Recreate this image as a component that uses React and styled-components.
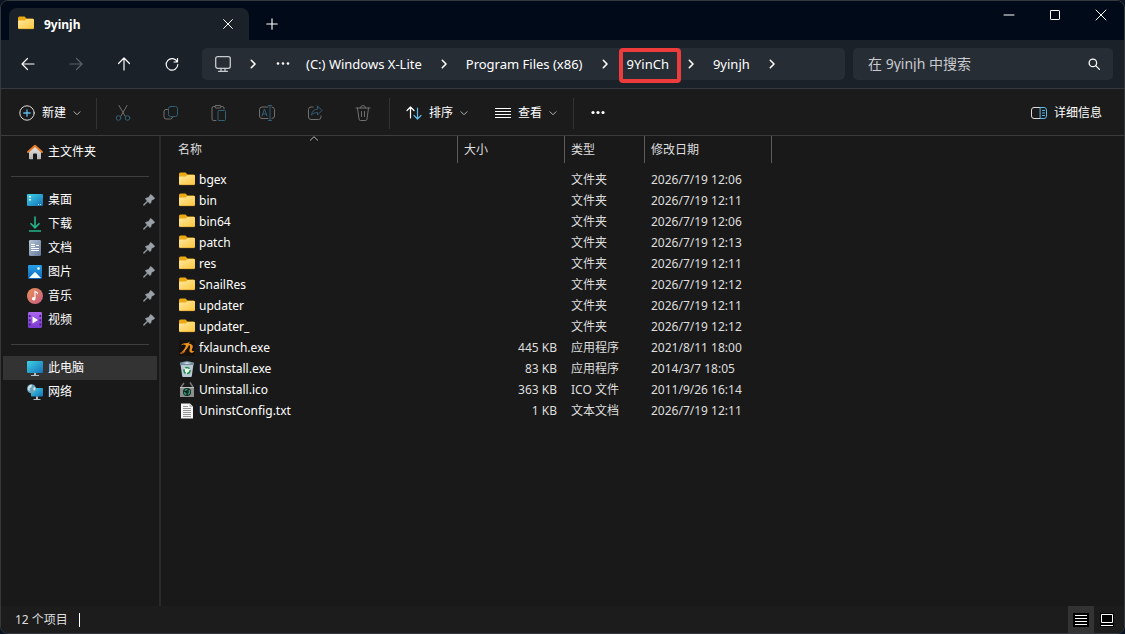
import React from "react";
import styled, { createGlobalStyle } from "styled-components";

const GlobalStyle = createGlobalStyle`
  * { box-sizing: border-box; }
  body {
    margin: 0;
    background: #0b1422;
    color: #fff;
    font: 12px/16px "Noto Sans", "Noto Sans CJK SC", sans-serif;
  }
  button, input { font: inherit; color: inherit; }
  button { border: 0; padding: 0; background: none; cursor: default; }
  svg { display: block; flex: none; overflow: visible; }
`;

const Window = styled.div`
  display: flex;
  flex-direction: column;
  min-height: 100vh;
  border: 1px solid #35393d;
  border-radius: 8px;
  overflow: hidden;
  background: #191919;
`;

const TitleBar = styled.header`
  display: flex;
  height: 39px;
  padding: 7px 0 0 8px;
  background: #000a18;
`;

const Tab = styled.div`
  display: flex;
  align-items: center;
  width: 240px;
  padding: 0 13px 0 9px;
  gap: 10px;
  border-radius: 8px 8px 0 0;
  background: #1b2129;
  font-weight: 700;
`;

const TabTitle = styled.span`
  flex: 1;
  padding-top: 2px;
`;

const TabButton = styled.button`
  display: grid;
  place-items: center;
  width: ${(p) => p.$width}px;
`;

const WindowControls = styled.div`
  display: flex;
  margin: -7px 0 0 auto;
`;

const WindowButton = styled.button`
  display: grid;
  place-items: center;
  width: 46px;
  height: 28px;
`;

const NavBar = styled.nav`
  display: flex;
  align-items: center;
  height: 49px;
  padding: 0 11px 0 3px;
  background: #1b2129;
  border-bottom: 1px solid #35393d;
`;

const NavButton = styled.button`
  display: grid;
  place-items: center;
  width: 48px;
  height: 32px;
  color: ${(p) => (p.disabled ? "#5d6269" : "#fff")};
`;

const AddressBar = styled.div`
  display: flex;
  align-items: center;
  flex: 1;
  height: 32px;
  margin: 0 8px 0 6px;
  padding-left: 13px;
  border-radius: 5px;
  background: #272d35;
  font-size: 13px;
`;

const CrumbChevron = styled.button`
  display: grid;
  place-items: center;
  width: 44px;
  height: 32px;
`;

const Crumb = styled.button`
  position: relative;
  height: 32px;
  margin-right: ${(p) => p.$after || 0}px;
  white-space: nowrap;
`;

const Highlight = styled.span`
  position: absolute;
  inset: 0 -12px -3px -8px;
  border: 4px solid #ee3c3c;
  border-radius: 4px;
  pointer-events: none;
`;

const SearchBox = styled.label`
  display: flex;
  align-items: center;
  width: 260px;
  height: 32px;
  padding: 0 13px 0 15px;
  border-radius: 5px;
  background: #272d35;
  font-size: 14px;
`;

const SearchInput = styled.input`
  flex: 1;
  min-width: 0;
  padding: 0;
  border: 0;
  outline: 0;
  background: none;
  &::placeholder { color: #c9cbce; opacity: 1; }
`;

const Toolbar = styled.div`
  display: flex;
  align-items: center;
  height: 47px;
  padding: 2px 22px 0 18px;
  background: #1b1b1b;
  border-bottom: 1px solid #3c3c3c;
`;

const ToolGroup = styled.div`
  display: flex;
  padding: 0 ${(p) => p.$pad}px;
  gap: 27px;
`;

const EditGroup = styled(ToolGroup)`
  gap: 0;
`;

const ToolButton = styled.button`
  display: flex;
  align-items: center;
  height: 32px;
  gap: 7px;
`;

const ToolIconButton = styled.button`
  display: grid;
  place-items: center;
  width: 48px;
  height: 32px;
`;

const ToolSeparator = styled.span`
  width: 1px;
  height: 31px;
  margin-left: ${(p) => p.$before || 0}px;
  background: #333;
`;

const Spacer = styled.span`
  flex: 1;
`;

const Body = styled.div`
  display: flex;
  flex: 1;
`;

const Sidebar = styled.aside`
  width: 160px;
  padding: 4px 2px 0;
  border-right: 2px solid #2a2a2a;
`;

const SideItem = styled.a`
  display: flex;
  align-items: center;
  height: 24px;
  gap: 5px;
  padding: 0 2px 0 24px;
  color: #fff;
  text-decoration: none;
  background: ${(p) => (p.$selected ? "#333" : "transparent")};
  & > span { flex: 1; }
`;

const SideDivider = styled.hr`
  height: 1px;
  margin: 12px 8px 11px 8px;
  border: 0;
  background: #3f3f3f;
`;

const Content = styled.main`
  flex: 1;
  min-width: 0;
`;

const FileTable = styled.table`
  table-layout: fixed;
  width: 611px;
  border-spacing: 0;
`;

const HeadCell = styled.th`
  position: relative;
  height: 27px;
  padding: 0 6px 0 ${(p) => (p.$first ? 17 : 6)}px;
  border-right: 1px solid #5a5a5a;
  text-align: left;
  font-weight: 400;
  color: #dedede;
`;

const SortMark = styled.svg`
  position: absolute;
  top: 0;
  left: 50%;
`;

const Rows = styled.tbody`
  &::before { content: ""; display: block; height: 6px; }
`;

const Cell = styled.td`
  height: 21px;
  padding: 0 8px 0 6px;
  text-align: ${(p) => p.$align || "left"};
  color: #dedede;
  white-space: nowrap;
`;

const NameCell = styled(Cell)`
  padding-left: 18px;
  color: #fff;
`;

const FileName = styled.span`
  display: flex;
  align-items: center;
  gap: 4px;
`;

const StatusBar = styled.footer`
  display: flex;
  align-items: center;
  height: 27px;
  padding: 0 4px 0 14px;
  background: #1c1c1c;
  color: #dedede;
`;

const StatusCaret = styled.span`
  width: 1px;
  height: 14px;
  margin-left: 11px;
  background: #fff;
`;

const ViewButton = styled.button`
  display: grid;
  place-items: center;
  width: 26px;
  height: 27px;
  background: ${(p) => (p.$active ? "#333" : "transparent")};
`;

const Line = ({ size = 16, color = "currentColor", width = 1, children, ...rest }) => (
  <svg width={size} height={size} viewBox="0 0 16 16" fill="none" stroke={color} strokeWidth={width} strokeLinecap="round" strokeLinejoin="round" aria-hidden="true" {...rest}>
    {children}
  </svg>
);

const Art = ({ children }) => (
  <svg width="16" height="16" viewBox="0 0 16 16" aria-hidden="true">{children}</svg>
);

const GradientDefs = styled.svg`
  position: absolute;
`;

const Gradients = () => (
  <GradientDefs width="0" height="0" aria-hidden="true">
    <defs>
      <linearGradient id="folder" x1="0" y1="0" x2="1" y2="1"><stop offset="0" stopColor="#ffe9a0" /><stop offset="1" stopColor="#fcc63c" /></linearGradient>
      <linearGradient id="screen" x1="0" y1="0" x2="1" y2="1"><stop offset="0" stopColor="#3fd2e6" /><stop offset="1" stopColor="#1470b8" /></linearGradient>
      <linearGradient id="home" x1="0" y1="0" x2="0" y2="1"><stop offset="0" stopColor="#e8e8e8" /><stop offset="1" stopColor="#b4b4b4" /></linearGradient>
      <linearGradient id="music" x1="0" y1="0" x2="1" y2="1"><stop offset="0" stopColor="#ee9256" /><stop offset="1" stopColor="#c45b83" /></linearGradient>
      <linearGradient id="video" x1="0" y1="0" x2="0" y2="1"><stop offset="0" stopColor="#ac66ee" /><stop offset="1" stopColor="#7a3ad0" /></linearGradient>
      <linearGradient id="doc" x1="0" y1="0" x2="1" y2="1"><stop offset="0" stopColor="#b5c5d8" /><stop offset="1" stopColor="#64799a" /></linearGradient>
      <linearGradient id="photo" x1="0" y1="0" x2="0" y2="1"><stop offset="0" stopColor="#28a1e8" /><stop offset="1" stopColor="#0c62b6" /></linearGradient>
    </defs>
  </GradientDefs>
);

const FolderIcon = () => (
  <Art>
    <path d="M0 2a1.500 1.500 0 0 1 1.500-1.500h5L8.500 2.500h6A1.500 1.500 0 0 1 16 4v2H0Z" fill="#eba914" />
    <path d="M0 5.500a1 1 0 0 1 1-1h5.800L8.500 3h6.300A1.200 1.200 0 0 1 16 4.200v7.500a1.300 1.300 0 0 1-1.300 1.300H1.300A1.300 1.300 0 0 1 0 11.700Z" fill="url(#folder)" />
    <path d="M.6 12.700h14.800" stroke="#dca22b" strokeWidth=".6" />
  </Art>
);
const HomeIcon = () => (
  <Art>
    <path d="M2 7 8 2l6 5v7.500a.8.8 0 0 1-.8.8H10V10.500a1 1 0 0 0-1-1H7a1 1 0 0 0-1 1v4.800H2.800a.8.8 0 0 1-.8-.8Z" fill="url(#home)" />
    <path d="M1 8 8 1.700 15 8" fill="none" stroke="#e57a27" strokeWidth="2" strokeLinecap="round" strokeLinejoin="round" />
  </Art>
);
const DesktopIcon = () => (
  <Art>
    <rect y="2" width="16" height="12" rx="1.200" fill="url(#screen)" />
    <path d="M2 4h2v1.500H2zM2 7h2v1.500H2z" fill="#e6fbff" />
    <path d="M11 12h1v1h-1zM13 12h1v1h-1z" fill="#b5dcff" />
  </Art>
);
const DownloadIcon = () => (
  <Art><path d="M8 .5v11M3.500 7.300 8 11.800l4.500-4.500M2 15h12" fill="none" stroke="#1fb78c" strokeWidth="1.600" /></Art>
);
const DocumentIcon = () => (
  <Art>
    <rect x="2" y="0" width="12" height="16" rx="1.200" fill="url(#doc)" />
    <path d="M4 4.500h4M4 6.500h4M9 5.500h3M4 8.500h8M4 10.500h8" stroke="#fff" />
  </Art>
);
const PictureIcon = () => (
  <Art>
    <rect x="1" y="1" width="14" height="14" rx="1.200" fill="url(#photo)" />
    <path d="m2 14 5.300-5.500a1 1 0 0 1 1.400 0L14 14Z" fill="#f2fbff" />
    <circle cx="11.500" cy="4.500" r="1.300" fill="#fff" />
  </Art>
);
const MusicIcon = () => (
  <Art>
    <circle cx="8" cy="8" r="8" fill="url(#music)" />
    <circle cx="6.700" cy="10.800" r="1.800" fill="#fff" />
    <path d="M8 10.500V3.500l2.500 1.300V6.300" fill="none" stroke="#fff" strokeWidth="1.100" />
  </Art>
);
const VideoIcon = () => (
  <Art>
    <rect x="1" y="0" width="14" height="16" rx="1.200" fill="url(#video)" />
    <path d="M2.700 3v11M13.300 3v11" stroke="#43207e" strokeWidth="1.700" strokeDasharray="2 2.300" />
    <path d="M5.500 4.500v7L11 8Z" fill="#fff" />
  </Art>
);
const ComputerIcon = () => (
  <Art>
    <rect y="1" width="16" height="12" rx="1" fill="url(#screen)" />
    <path d="M7 13h2v2h3v1H4v-1h3z" fill="#b7c1c9" />
  </Art>
);
const NetworkIcon = () => (
  <Art>
    <rect x="4" y="4" width="12" height="8.500" rx=".8" fill="url(#screen)" />
    <path d="M9 12.500h2V15h2.500v1h-7v-1H9z" fill="#b7c1c9" />
    <circle cx="4.500" cy="4.700" r="4.500" fill="#6ba5bd" />
    <path d="M1 3c1-2 3-2.500 4-2.200L4.500 3 2.500 4.500 3 7 1 6Zm5 1 2-1 .7 2L7 7Z" fill="#cfe4ea" />
  </Art>
);
const LaunchIcon = () => (
  <Art>
    <rect width="16" height="16" rx="2" fill="#15110e" />
    <path d="M2 5.500C4 1.500 7 5 11 1.500l-1.300 2.200c3.300-.2 5.300 2.300 3.300 5.300-1 1.800.5 2.500 2.500 2-2 3-5.500 2-5-1 .3-2 1.500-4-.5-5-1.500 3-3.500 7-8.500 8 2.500-1.700 4.500-4.500 5.500-7.500C5 4.500 4 4 2 5.500Z" fill="#ee921e" />
    <path d="M1 13c2 .7 4-.5 5-2" fill="none" stroke="#c96813" strokeWidth="1.200" />
  </Art>
);
const RecycleIcon = () => (
  <Art>
    <path d="M1.500 3h13l-1.700 12.200a1 1 0 0 1-1 .8H4.200a1 1 0 0 1-1-.8Z" fill="#b9c9d3" />
    <path d="M1 1.500 8 0l7 1.500V4H1Z" fill="#71889a" />
    <path d="m3 2 5-.8 5 .8-5 1Z" fill="#d9e5ed" />
    <circle cx="8" cy="9.500" r="3" fill="#eefaf0" stroke="#218c4c" strokeWidth="1.600" strokeDasharray="4.500 1.500" />
  </Art>
);
const UninstallIcon = () => (
  <Art>
    <path d="M2 5 5 1M11 .5 14 5" fill="none" stroke="#777" strokeWidth="1.500" />
    <path d="M1 5h14v10H1Z" fill="#8b8f8d" />
    <path d="M1 5h14v1H1Z" fill="#c1c1c1" />
    <circle cx="8" cy="10" r="4" fill="#10251e" />
    <circle cx="8" cy="10" r="2.500" fill="none" stroke="#2f9b77" strokeWidth="1.500" strokeDasharray="3 1.500" />
  </Art>
);
const TextIcon = () => (
  <Art>
    <path d="M2 .5h9L14 3.500V15.500H2Z" fill="#f5f5f5" />
    <path d="M10.500.5v3.500H14" fill="#bbb" />
    <path d="M4 3.500h5M4 5.500h8M4 7.500h8M4 9.500h8M4 11.500h8M4 13.500h8" stroke="#8a8a8a" strokeWidth=".9" />
  </Art>
);
const PinIcon = () => (
  <svg width="12" height="12" viewBox="0 0 12 12" aria-hidden="true">
    <path d="M7.300.8a.7.700 0 0 1 1 0l3 3a.7.700 0 0 1-.2 1.100L8.600 6.200 7.700 9a.7.700 0 0 1-1.100.2L4.900 7.500 1.200 11.200l-.7.100.1-.7L4.300 6.900 2.700 5.300a.7.700 0 0 1 .3-1.100l2.800-.9Z" fill="#99a1a9" stroke="#99a1a9" strokeWidth=".6" />
  </svg>
);

const ChevronRight = () => <Line width={1.6}><path d="m6.300 4.300 3.700 3.700-3.700 3.700" /></Line>;
const ChevronDown = () => <Line size={8} width={2} color="#b5b5b5"><path d="m2 5.500 6 6 6-6" /></Line>;
const DotsIcon = ({ r }) => (
  <Line><g fill="currentColor" stroke="none"><circle cx="3" cy="7.500" r={r} /><circle cx="8" cy="7.500" r={r} /><circle cx="13" cy="7.500" r={r} /></g></Line>
);

const gray = "#707070";
const teal = "#315f76";

const editTools = [
  ["剪切", <Line color={gray}><path d="m4 .5 6.200 10.800M12 .5 5.800 11.300" /><circle cx="3.500" cy="13" r="2.300" stroke={teal} /><circle cx="12.500" cy="13" r="2.300" stroke={teal} /></Line>],
  ["复制", <Line color={gray}><path d="M4.500 4.500H3a2 2 0 0 0-2 2v5.500a2 2 0 0 0 2 2h4.500a2 2 0 0 0 2-2" /><rect x="5.500" y="1.500" width="9" height="10" rx="2" stroke={teal} /></Line>],
  ["粘贴", <Line color={gray}><path d="M5 15.500H2.500a1.500 1.500 0 0 1-1.500-1.500V3a1.500 1.500 0 0 1 1.500-1.500H4M10 1.500h1.500A1.500 1.500 0 0 1 13 3v1" /><rect x="4" y=".5" width="6" height="2.500" rx="1" /><rect x="7" y="5.500" width="7.500" height="10" rx="1" stroke={teal} /></Line>],
  ["重命名", <Line color={gray}><path d="M9 2H3a2.500 2.500 0 0 0-2.500 2.500v6.500A2.500 2.500 0 0 0 3 13.500h6M13 2a2.500 2.500 0 0 1 2.500 2.500v6.500a2.500 2.500 0 0 1-2.500 2.500" /><path d="m3 11 2.500-7L8 11M3.900 9h3.200M11 .5v15M9.500.5h3M9.500 15.500h3" stroke={teal} /></Line>],
  ["共享", <Line color={gray}><path d="M6 2H4a2.500 2.500 0 0 0-2.500 2.500V12A2.500 2.500 0 0 0 4 14.500h7.500A2.500 2.500 0 0 0 14 12v-1" /><path d="m10.500 1 4.500 4.500-4.500 4.500V7.500C7.500 7.500 6 8.500 4.500 10c.5-3.500 2.500-5.800 6-6Z" stroke={teal} /></Line>],
  ["删除", <Line color={gray}><path d="M1 3h14M5.500 3a2.500 2.500 0 0 1 5 0M2.500 3 4 14a1.500 1.500 0 0 0 1.500 1.500h5A1.500 1.500 0 0 0 12 14l1.500-11M6.500 6.500v5M9.500 6.500v5" /></Line>],
];

const quickAccess = [
  ["桌面", DesktopIcon],
  ["下载", DownloadIcon],
  ["文档", DocumentIcon],
  ["图片", PictureIcon],
  ["音乐", MusicIcon],
  ["视频", VideoIcon],
];

const files = [
  [FolderIcon, "bgex", "", "文件夹", "2026/7/19 12:06"],
  [FolderIcon, "bin", "", "文件夹", "2026/7/19 12:11"],
  [FolderIcon, "bin64", "", "文件夹", "2026/7/19 12:06"],
  [FolderIcon, "patch", "", "文件夹", "2026/7/19 12:13"],
  [FolderIcon, "res", "", "文件夹", "2026/7/19 12:11"],
  [FolderIcon, "SnailRes", "", "文件夹", "2026/7/19 12:12"],
  [FolderIcon, "updater", "", "文件夹", "2026/7/19 12:11"],
  [FolderIcon, "updater_", "", "文件夹", "2026/7/19 12:12"],
  [LaunchIcon, "fxlaunch.exe", "445 KB", "应用程序", "2021/8/11 18:00"],
  [RecycleIcon, "Uninstall.exe", "83 KB", "应用程序", "2014/3/7 18:05"],
  [UninstallIcon, "Uninstall.ico", "363 KB", "ICO 文件", "2011/9/26 16:14"],
  [TextIcon, "UninstConfig.txt", "1 KB", "文本文档", "2026/7/19 12:11"],
];

const path = [
  { name: "(C:) Windows X-Lite" },
  { name: "Program Files (x86)" },
  { name: "9YinCh", highlighted: true },
  { name: "9yinjh" },
];

const SideLink = ({ icon: Icon, label, pinned, selected }) => (
  <SideItem href="#" $selected={selected}>
    <Icon />
    <span>{label}</span>
    {pinned && <PinIcon />}
  </SideItem>
);

export default function App() {
  return (
    <Window>
      <GlobalStyle />
      <Gradients />
      <TitleBar>
        <Tab>
          <FolderIcon />
          <TabTitle>9yinjh</TabTitle>
          <TabButton $width={16} aria-label="关闭标签页"><Line size={10} width={1.6}><path d="m1 1 14 14M15 1 1 15" /></Line></TabButton>
        </Tab>
        <TabButton $width={46} aria-label="新标签页"><Line size={12} width={1.5}><path d="M8 1v14M1 8h14" /></Line></TabButton>
        <WindowControls>
          <WindowButton aria-label="最小化"><Line size={10} width={1.6}><path d="M0 8h16" /></Line></WindowButton>
          <WindowButton aria-label="最大化"><Line size={10} width={1.6}><rect x=".8" y=".8" width="14.400" height="14.400" rx="1" /></Line></WindowButton>
          <WindowButton aria-label="关闭"><Line size={10} width={1.6}><path d="m0 0 16 16M16 0 0 16" /></Line></WindowButton>
        </WindowControls>
      </TitleBar>

      <NavBar>
        <NavButton aria-label="后退"><Line width={1.2}><path d="M14 8H2M7.500 2.500 2 8l5.500 5.500" /></Line></NavButton>
        <NavButton aria-label="前进" disabled><Line width={1.2}><path d="M2 8h12M8.500 2.500 14 8l-5.500 5.500" /></Line></NavButton>
        <NavButton aria-label="向上"><Line width={1.2}><path d="M8 14V2M2.500 7.500 8 2l5.500 5.500" /></Line></NavButton>
        <NavButton aria-label="刷新"><Line width={1.2}><path d="M13.300 6A5.800 5.800 0 1 0 13.800 8.500M13.500 2.500V6H10" /></Line></NavButton>
        <AddressBar>
          <Line width={1.3} color="#c8cbce"><rect x=".7" y=".7" width="14.600" height="11.600" rx="2" /><path d="M6 12.500V15M10 12.500V15M3.500 15.300h9" /></Line>
          <CrumbChevron aria-label="展开"><ChevronRight /></CrumbChevron>
          <Crumb aria-label="更多位置" $after={15}><DotsIcon r={1.3} /></Crumb>
          {path.map(({ name, highlighted }) => (
            <React.Fragment key={name}>
              <Crumb>{name}{highlighted && <Highlight />}</Crumb>
              <CrumbChevron aria-label={`${name} 子文件夹`}><ChevronRight /></CrumbChevron>
            </React.Fragment>
          ))}
        </AddressBar>
        <SearchBox>
          <SearchInput type="text" aria-label="搜索" placeholder="在 9yinjh 中搜索" />
          <Line size={12} width={1.7}><circle cx="6.500" cy="6.500" r="5" /><path d="m10.200 10.200 5 5" /></Line>
        </SearchBox>
      </NavBar>

      <Toolbar>
        <ToolButton>
          <Line><circle cx="8" cy="8" r="7.200" stroke="#ddd" /><path d="M8 4.800v6.400M4.800 8h6.400" stroke="#5cb9ea" strokeWidth="1.300" /></Line>
          新建
          <ChevronDown />
        </ToolButton>
        <ToolSeparator $before={15} />
        <EditGroup $pad={2}>
          {editTools.map(([label, icon]) => (
            <ToolIconButton key={label} aria-label={label} disabled>{icon}</ToolIconButton>
          ))}
        </EditGroup>
        <ToolSeparator />
        <ToolGroup $pad={16}>
          <ToolButton>
            <Line width={1.2}><path d="M4.500 13V2M1 5.500 4.500 2 8 5.500" /><path d="M11.500 3v11M8 10.500l3.500 3.500 3.500-3.500" stroke="#5cb9ea" /></Line>
            排序
            <ChevronDown />
          </ToolButton>
          <ToolButton>
            <Line><path d="M0 3.500h16M0 6.500h16M0 9.500h16M0 12.500h16" strokeLinecap="butt" /></Line>
            查看
            <ChevronDown />
          </ToolButton>
        </ToolGroup>
        <ToolSeparator />
        <ToolIconButton aria-label="更多"><DotsIcon r={1.6} /></ToolIconButton>
        <Spacer />
        <ToolButton>
          <Line><path d="M9 2.500H3A2.500 2.500 0 0 0 .5 5v6A2.500 2.500 0 0 0 3 13.500h6" stroke="#ddd" /><path d="M9.500 2.500H13A2.500 2.500 0 0 1 15.500 5v6a2.500 2.500 0 0 1-2.500 2.500H9.500ZM11.500 5.500h2M11.500 8h2M11.500 10.500h2" stroke="#5cb9ea" /></Line>
          详细信息
        </ToolButton>
      </Toolbar>

      <Body>
        <Sidebar>
          <SideLink icon={HomeIcon} label="主文件夹" />
          <SideDivider />
          {quickAccess.map(([label, icon]) => <SideLink key={label} icon={icon} label={label} pinned />)}
          <SideDivider />
          <SideLink icon={ComputerIcon} label="此电脑" selected />
          <SideLink icon={NetworkIcon} label="网络" />
        </Sidebar>
        <Content>
          <FileTable>
            <colgroup><col width="297" /><col width="107" /><col width="80" /><col width="127" /></colgroup>
            <thead>
              <tr>
                <HeadCell $first>
                  名称
                  <SortMark width="10" height="5" viewBox="0 0 10 5" fill="none" stroke="#b5b5b5"><path d="M1 4.500 5 .7l4 3.800" /></SortMark>
                </HeadCell>
                <HeadCell>大小</HeadCell>
                <HeadCell>类型</HeadCell>
                <HeadCell>修改日期</HeadCell>
              </tr>
            </thead>
            <Rows>
              {files.map(([Icon, name, size, type, date]) => (
                <tr key={name}>
                  <NameCell><FileName><Icon />{name}</FileName></NameCell>
                  <Cell $align="right">{size}</Cell>
                  <Cell>{type}</Cell>
                  <Cell>{date}</Cell>
                </tr>
              ))}
            </Rows>
          </FileTable>
        </Content>
      </Body>

      <StatusBar>
        <span>12 个项目</span>
        <StatusCaret />
        <Spacer />
        <ViewButton $active aria-label="详细信息视图">
          <svg width="16" height="14" viewBox="0 0 16 14"><rect width="16" height="14" fill="#000" /><path d="M2 2.500h12M2 5.500h12M2 8.500h12M2 11.500h12" stroke="#fff" /></svg>
        </ViewButton>
        <ViewButton aria-label="缩略图视图">
          <svg width="14" height="14" viewBox="0 0 14 14"><rect width="14" height="14" fill="#000" /><path d="M1.500 1.500h11v8h-11ZM1 12.500h12" fill="none" stroke="#fff" /></svg>
        </ViewButton>
      </StatusBar>
    </Window>
  );
}
